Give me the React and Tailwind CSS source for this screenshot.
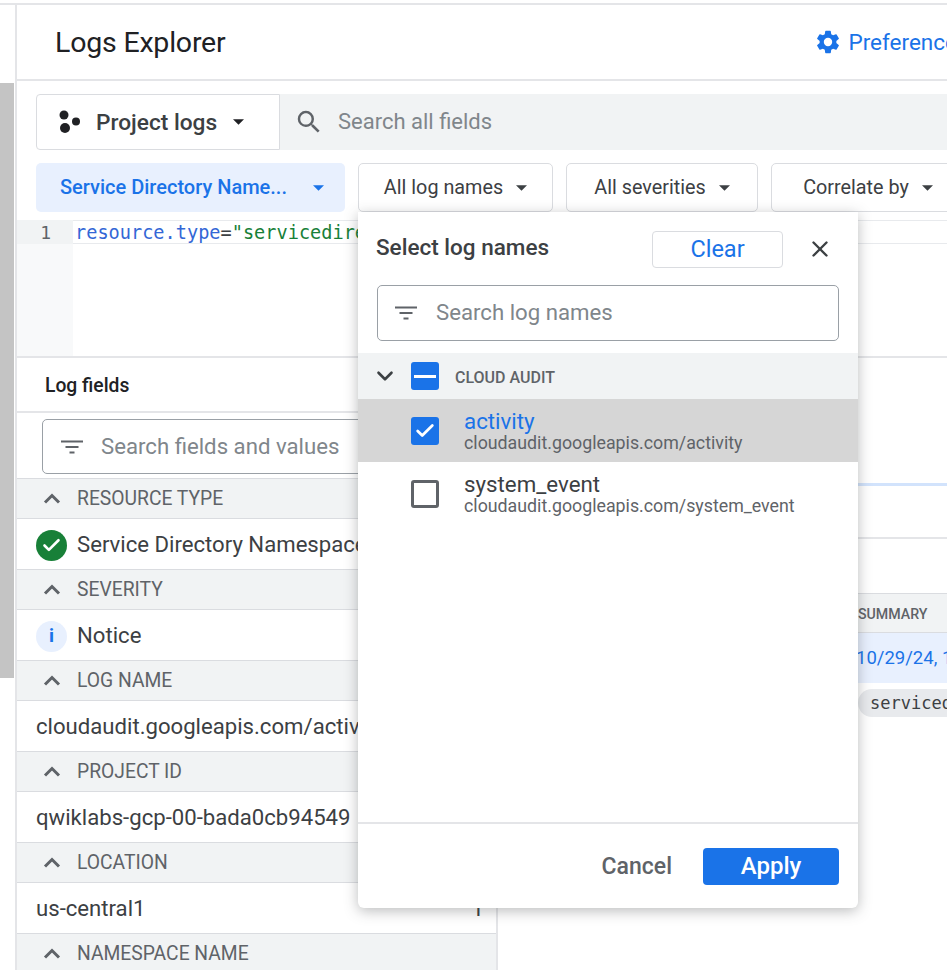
import { ChevronDown, X, Check } from "lucide-react";

const roboto = "font-['Roboto',sans-serif]";

function Caret({ className }) {
  return (
    <svg viewBox="0 0 10 5" className={`w-[11px] h-[6px] fill-current shrink-0 ${className || ""}`}>
      <path d="M0 0h10L5 5z" />
    </svg>
  );
}

function FilterIcon() {
  return (
    <svg viewBox="0 0 24 24" className="w-6 h-6 fill-[#5f6368] shrink-0">
      <path d="M1 5.5h22v2H1zM5.5 11h13v2h-13zM9.5 16.5h5v2h-5z" />
    </svg>
  );
}

function FilterButton({ label, className }) {
  return (
    <button className={`h-[49px] shrink-0 flex items-center justify-center gap-[13px] bg-white border border-[#dadce0] rounded-[5px] text-[#3c4043] text-[19.8px] ${className}`}>
      <span>{label}</span>
      <Caret />
    </button>
  );
}

function FieldSection({ title, children, count, last }) {
  return (
    <div>
      <div className="h-[40px] flex items-center bg-[#f1f3f4] border-b border-[#dadce0] text-[#5f6368] text-[19.3px]">
        <svg viewBox="0 0 18 11" className="w-[18px] h-[11px] ml-[26px] mr-[16px] shrink-0 fill-none stroke-[#5f6368] stroke-[3]">
          <path d="M2 9.5 9 2.5l7 7" />
        </svg>
        <span className="pt-[2px]">{title}</span>
      </div>
      {!last && (
        <div className="h-[51px] flex items-center pl-[19px] pr-[12px] pt-[2px] border-b border-[#dadce0] text-[#3c4043] text-[22.15px] whitespace-nowrap">
          {children}
          {count && <span className="ml-auto">{count}</span>}
        </div>
      )}
    </div>
  );
}

export default function App() {
  return (
    <div className={`relative w-[947px] h-[970px] overflow-hidden bg-white ${roboto}`}>
      <div className="mt-[3px] h-[967px] border-t-2 border-[#e4e5e8] flex">
        {/* left scroll rail */}
        <div className="w-[15px] shrink-0">
          <div className="mt-[78px] h-[595px] w-[14px] bg-[#c4c4c4]" />
        </div>

        <div className="w-[932px] shrink-0 border-l-2 border-[#e4e5e8] flex flex-col min-w-0">
          {/* header */}
          <div className="h-[76px] shrink-0 flex items-center pl-[38px] border-b-2 border-[#e4e5e8] whitespace-nowrap">
            <span className="pt-[2px] text-[28.5px] text-[#202124] tracking-[-0.2px]">Logs Explorer</span>
            <div className="ml-[589px] flex items-center gap-[6px] text-[#1a73e8] text-[22.5px]">
              <svg viewBox="0 0 24 24" className="w-[28px] h-[28px] fill-[#1a73e8] shrink-0">
                <path d="M19.14 12.94c.04-.3.06-.61.06-.94s-.02-.64-.07-.94l2.03-1.58a.49.49 0 0 0 .12-.61l-1.92-3.32a.49.49 0 0 0-.59-.22l-2.39.96a7 7 0 0 0-1.62-.94l-.36-2.54a.48.48 0 0 0-.48-.41h-3.84a.47.47 0 0 0-.47.41l-.36 2.54c-.59.24-1.13.57-1.62.94l-2.39-.96a.48.48 0 0 0-.59.22L2.74 8.87a.47.47 0 0 0 .12.61l2.03 1.58c-.05.3-.09.63-.09.94s.02.64.07.94l-2.03 1.58a.49.49 0 0 0-.12.61l1.92 3.32c.12.22.37.29.59.22l2.39-.96c.5.38 1.03.7 1.62.94l.36 2.54c.05.24.24.41.48.41h3.84c.24 0 .44-.17.47-.41l.36-2.54c.59-.24 1.13-.56 1.62-.94l2.39.96c.22.08.47 0 .59-.22l1.92-3.32a.47.47 0 0 0-.12-.61l-2.01-1.58zM12 15.6A3.6 3.6 0 1 1 12 8.4a3.6 3.6 0 0 1 0 7.2z" />
              </svg>
              <span className="pt-[2px]">Preferences</span>
            </div>
          </div>

          {/* search row */}
          <div className="h-[56px] mt-[13px] ml-[19px] shrink-0 flex">
            <button className="w-[244px] shrink-0 flex items-center pl-[22px] bg-white border border-[#dadce0] rounded-l-[4px] text-[#3c4043] text-[22.7px] font-medium">
              <svg viewBox="0 0 22 24" className="w-[22px] h-[24px] fill-[#202124] shrink-0 mr-[15px]">
                <circle cx="5" cy="5" r="4.5" />
                <circle cx="17" cy="11.5" r="4" />
                <circle cx="6" cy="18" r="5" />
              </svg>
              <span className="pt-[2px]">Project logs</span>
              <Caret className="ml-[16px] text-[#202124]" />
            </button>
            <div className="flex-1 flex items-center bg-[#f1f3f4] pl-[14px] text-[#80868b] text-[22px]">
              <svg viewBox="0 0 24 24" className="w-[30px] h-[30px] fill-[#5f6368] mr-[14px] shrink-0">
                <path d="M15.5 14h-.79l-.28-.27A6.47 6.47 0 0 0 16 9.5 6.5 6.5 0 1 0 9.5 16c1.61 0 3.09-.59 4.23-1.57l.27.28v.79l5 4.99L20.49 19l-4.99-5zm-6 0C7.01 14 5 11.99 5 9.5S7.01 5 9.5 5 14 7.01 14 9.5 11.99 14 9.5 14z" />
              </svg>
              <span className="pb-[2px]">Search all fields</span>
            </div>
          </div>

          {/* filter row */}
          <div className="h-[49px] mt-[13px] ml-[19px] shrink-0 flex gap-[13px]">
            <button className="w-[309px] shrink-0 flex items-center pl-[24px] bg-[#e8f0fe] rounded-[5px] text-[#1a73e8] text-[20px] font-medium whitespace-nowrap">
              <span className="pb-[2px]">Service Directory Name...</span>
              <Caret className="ml-[26px]" />
            </button>
            <FilterButton label="All log names" className="w-[195px]" />
            <FilterButton label="All severities" className="w-[192px]" />
            <FilterButton label="Correlate by" className="w-[194px]" />
          </div>

          {/* query editor */}
          <div className="mt-[8px] h-[138px] shrink-0 border-b-2 border-[#e4e5e8] flex">
            <div className="w-[56px] shrink-0 bg-[#f8f9fa]">
              <div className="h-[24px] flex items-center justify-end pr-[22px] bg-[#f1f3f4] text-[#5f6368] font-['DejaVu_Sans_Mono',monospace] text-[18px]">1</div>
            </div>
            <div className="flex-1 h-[24px] border-y border-[#e8eaed] pl-[2px] pt-[2px] flex items-center font-['DejaVu_Sans_Mono',monospace] text-[18.6px] whitespace-nowrap">
              <span className="text-[#3367d6]">resource.type</span>
              <span className="text-[#3c4043]">=</span>
              <span className="text-[#188038]">"servicedirectory_namespace"</span>
            </div>
          </div>

          <div className="flex-1 flex min-h-0">
            {/* log fields */}
            <div className="w-[481px] shrink-0 border-r-2 border-[#e4e5e8]">
              <div className="h-[55px] flex items-center pl-[28px] pt-[4px] border-b-2 border-[#e4e5e8] text-[#202124] text-[19.3px] font-medium">Log fields</div>
              <div className="h-[66px] pt-[6px] pl-[25px] pr-[16px] border-b border-[#dadce0]">
                <div className="h-[55px] flex items-center pl-[17px] border border-[#9aa0a6] rounded-[5px] text-[#80868b] text-[22.2px]">
                  <FilterIcon />
                  <span className="ml-[17px]">Search fields and values</span>
                </div>
              </div>
              <FieldSection title="RESOURCE TYPE" count="1">
                <span className="w-[31px] h-[31px] rounded-full bg-[#188038] flex items-center justify-center mr-[10px] shrink-0">
                  <Check className="w-[21px] h-[21px] text-white" strokeWidth={3} />
                </span>
                Service Directory Namespace
              </FieldSection>
              <FieldSection title="SEVERITY" count="1">
                <span className="w-[31px] h-[31px] rounded-full bg-[#e8f0fe] flex items-center justify-center mr-[10px] shrink-0 text-[#1a73e8] font-bold text-[19px]">i</span>
                Notice
              </FieldSection>
              <FieldSection title="LOG NAME" count="1">cloudaudit.googleapis.com/activity</FieldSection>
              <FieldSection title="PROJECT ID" count="1">qwiklabs-gcp-00-bada0cb94549</FieldSection>
              <FieldSection title="LOCATION" count="1">us-central1</FieldSection>
              <FieldSection title="NAMESPACE NAME" last />
            </div>

            {/* results side, mostly behind the popover */}
            <div className="flex-1 min-w-0 overflow-hidden">
              <div className="h-[128px] border-b-[3px] border-[#d2e3fc]" />
              <div className="h-[53px] border-b-2 border-[#e4e5e8]" />
              <div className="mt-[54px] h-[40px] flex items-center justify-end pr-[20px] pt-[3px] bg-[#f1f3f4] border-y border-[#dadce0] text-[#5f6368] text-[14.2px] font-medium">
                <span className="w-[69px] whitespace-nowrap">SUMMARY</span>
              </div>
              <div className="h-[50px] flex items-center bg-[#e8f0fe] pl-[358px] pt-[2px] text-[#1a73e8] text-[18.5px] whitespace-nowrap">10/29/24, 1:00 PM</div>
              <div className="mt-[6px] ml-[360px] h-[28px] w-[200px] flex items-center pl-[12px] pt-[2px] bg-[#e8eaed] rounded-l-full font-['DejaVu_Sans_Mono',monospace] text-[#3c4043] text-[17px] whitespace-nowrap">servicedirectory</div>
            </div>
          </div>
        </div>
      </div>

      {/* log names popover */}
      <div className="absolute left-[358px] top-[212px] w-[500px] h-[696px] bg-white rounded-b-[6px] shadow-[0_3px_14px_rgba(60,64,67,0.35)] flex flex-col">
        <div className="h-[73px] shrink-0 flex items-center pl-[18px] pr-[25px]">
          <span className="text-[22.5px] font-medium text-[#3c4043] pb-[1px]">Select log names</span>
          <button className="ml-auto w-[131px] h-[37px] mt-[1px] border border-[#dadce0] rounded-[4px] text-[#1a73e8] text-[23.5px]">Clear</button>
          <X className="ml-[24px] w-[26px] h-[26px] mt-[1px] text-[#3c4043]" strokeWidth={2.2} />
        </div>
        <div className="mx-[19px] h-[56px] shrink-0 flex items-center pl-[16px] border border-[#9aa0a6] rounded-[5px] text-[#80868b] text-[22.2px]">
          <FilterIcon />
          <span className="ml-[18px]">Search log names</span>
        </div>
        <div className="mt-[12px] h-[46px] shrink-0 flex items-center bg-[#f1f3f4] text-[#5f6368] text-[16px]">
          <ChevronDown className="w-[26px] h-[26px] ml-[14px] text-[#3c4043]" strokeWidth={2.4} />
          <span className="w-[28px] h-[28px] ml-[13px] rounded-[3px] bg-[#1a73e8] flex items-center justify-center">
            <span className="w-[22px] h-[3px] bg-white" />
          </span>
          <span className="ml-[16px] pt-[4px] font-medium">CLOUD AUDIT</span>
        </div>
        <div className="h-[63px] shrink-0 flex items-center bg-[#d6d6d6] pl-[53px]">
          <span className="w-[28px] h-[28px] rounded-[3px] bg-[#1a73e8] flex items-center justify-center shrink-0">
            <Check className="w-[22px] h-[22px] text-white" strokeWidth={3} />
          </span>
          <div className="ml-[25px]">
            <div className="text-[22.3px] leading-[24px] text-[#1a73e8]">activity</div>
            <div className="text-[17.8px] leading-[19px] text-[#5f6368]">cloudaudit.googleapis.com/activity</div>
          </div>
        </div>
        <div className="h-[63px] shrink-0 flex items-center pl-[53px]">
          <span className="w-[28px] h-[28px] rounded-[3px] border-[3px] border-[#5f6368] shrink-0" />
          <div className="ml-[25px]">
            <div className="text-[22.3px] leading-[24px] text-[#3c4043]">system_event</div>
            <div className="text-[17.8px] leading-[19px] text-[#5f6368]">cloudaudit.googleapis.com/system_event</div>
          </div>
        </div>
        <div className="mt-auto h-[86px] shrink-0 border-t-2 border-[#e4e5e8] flex items-center justify-end pr-[19px]">
          <span className="text-[23px] font-medium text-[#5f6368] mr-[31px] pt-[2px]">Cancel</span>
          <button className="w-[136px] h-[37px] rounded-[4px] bg-[#1a73e8] text-white text-[24px] font-medium">Apply</button>
        </div>
      </div>
    </div>
  );
}
